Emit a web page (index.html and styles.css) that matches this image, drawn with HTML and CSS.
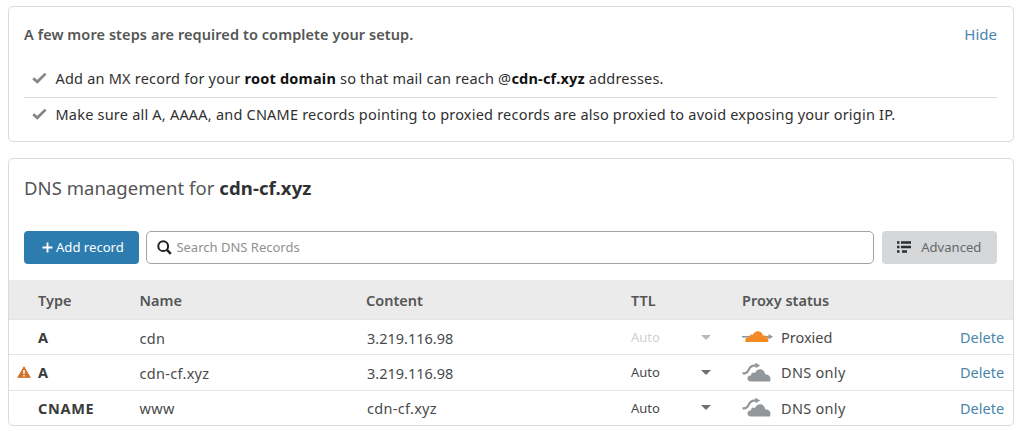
FILE: index.html
```html
<!DOCTYPE html>
<html lang="en">
<head>
<meta charset="utf-8">
<title>DNS management</title>
<link rel="stylesheet" href="styles.css">
</head>
<body>
<svg class="defs" width="0" height="0" aria-hidden="true">
  <symbol id="check" viewBox="0 0 15 12"><path d="M1.2 6.2 5.3 9.8 13.6 1.6" fill="none" stroke="currentColor" stroke-width="2.7"/></symbol>
  <symbol id="cloud-off" viewBox="0 0 30 21">
    <path d="M.5 11.200C4.700 11.800 5.700 9.600 7.100 6.900 8.500 4.100 10.100 3.300 14 3.300" fill="none" stroke="currentColor" stroke-width="2.2"/>
    <path d="M13.400.8 18.200 3.400 13.600 6.200Z"/>
    <path d="M8.800 19.600C4.200 19.200 4.400 13 8.900 13.400 9 10.600 11.300 9.700 13 10.900 15.100 5.500 22.600 6.200 23.200 12.300 27.800 12 29.700 16.200 27.800 19.600Z"/>
  </symbol>
</svg>
<section class="card steps">
  <div class="steps-head"><h2 class="steps-title">A few more steps are required to complete your setup.</h2><a class="link hide">Hide</a></div>
  <ul class="step-list">
    <li class="step"><svg class="check"><use href="#check"/></svg><span class="step-text">Add an MX record for your <b>root domain</b> so that mail can reach @<b>cdn-cf.xyz</b> addresses.</span></li>
    <li class="step"><svg class="check"><use href="#check"/></svg><span class="step-text">Make sure all A, AAAA, and CNAME records pointing to proxied records are also proxied to avoid exposing your origin IP.</span></li>
  </ul>
</section>
<section class="card dns">
  <h1 class="dns-title">DNS management for <b>cdn-cf.xyz</b></h1>
  <div class="toolbar">
    <button class="btn btn-add"><svg width="11" height="11" viewBox="0 0 11 11"><path d="M5.500.5v10M.5 5.500h10" stroke="currentColor" stroke-width="1.900"/></svg><span>Add record</span></button>
    <div class="search"><svg width="15" height="15" viewBox="0 0 15 15" fill="none" stroke="#222"><circle cx="6.200" cy="6.200" r="4.900" stroke-width="2"/><path d="M9.700 9.700 13.800 13.900" stroke-width="2.400"/></svg><span>Search DNS Records</span></div>
    <button class="btn btn-adv"><svg width="14" height="12" viewBox="0 0 14 12"><path d="M0 1.500h2.500M4 1.500h10M0 6h2.500M4 6h10M0 10.500h2.500M5 10.500h5" stroke="#2d2e32" stroke-width="2.300"/></svg><span>Advanced</span></button>
  </div>
  <div class="table">
    <div class="row head"><span></span><span>Type</span><span>Name</span><span>Content</span><span>TTL</span><span></span><span>Proxy status</span><span></span></div>
    <div class="row">
      <span></span><b class="type">A</b><span class="name">cdn</span><span class="ip">3.219.116.98</span><span class="ttl off">Auto</span><i class="caret off"></i>
      <span class="status"><svg class="cloud" viewBox="0 0 31 21"><path d="M0 9.800h28" stroke="#92979b" stroke-width="1.600"/><path d="M26.500 7 31 9.800 26.500 12.600Z" fill="#92979b"/><path d="M3.400 15C2.800 11.500 4.400 9.900 7.300 10.200 7.500 7.500 9.400 7 10.800 7.900 12.500 3 20 3 20.900 8.500 24.600 7.800 26.800 11 26.200 15Z" fill="#f38a26"/></svg><span class="proxied">Proxied</span></span><a class="link">Delete</a>
    </div>
    <div class="row">
      <svg class="warn" viewBox="0 0 14 12"><path d="M7 .8 13.200 11.400H.8Z" fill="#cf762e" stroke="#cf762e" stroke-linejoin="round"/><path d="M7 4v4M7 9v1.500" stroke="#fff" stroke-width="1.400"/></svg><b class="type">A</b><span class="name">cdn-cf.xyz</span><span class="ip">3.219.116.98</span><span class="ttl">Auto</span><i class="caret"></i>
      <span class="status"><svg class="cloud"><use href="#cloud-off" width="30" height="21"/></svg><span>DNS only</span></span><a class="link">Delete</a>
    </div>
    <div class="row">
      <span></span><b class="type cname">CNAME</b><span class="name">www</span><span class="name target">cdn-cf.xyz</span><span class="ttl">Auto</span><i class="caret"></i>
      <span class="status"><svg class="cloud"><use href="#cloud-off" width="30" height="21"/></svg><span>DNS only</span></span><a class="link">Delete</a>
    </div>
  </div>
</section>
</body>
</html>
```
FILE: styles.css
```css
* { box-sizing: border-box; }
body { margin: 0; padding: 6px 10px 0 8px; background: #fff; color: #484a4a; font: 14.5px/20px "Noto Sans", "Open Sans", sans-serif; }
.defs { display: block; }
.card { border: 1px solid #d9dada; border-radius: 5px; background: #fff; overflow: hidden; }
.steps { height: 136px; padding: 17px 16px 0 15px; }
.steps-head { display: flex; justify-content: space-between; }
.steps-title { margin: 0; font-size: 14.5px; line-height: 20px; font-weight: 600; letter-spacing: .08px; color: #545656; }
.link { color: #4a86ab; }
.hide { font-size: 15px; }
.step-list { list-style: none; margin: 16px 0 0; padding: 0; color: #303030; }
.step { display: flex; align-items: center; height: 38px; padding: 0 0 2px 8px; gap: 8.500px; border-bottom: 1px solid #d9dada; white-space: nowrap; }
.step:last-child { height: 33px; border: 0; padding-bottom: 1px; }
.step-text { letter-spacing: .21px; }
.step b { color: #111; }
.check { width: 15px; height: 12px; color: #858585; }
.dns { height: 268px; margin-top: 16px; }
.dns-title { margin: 15px 0 0 15px; font-size: 18.500px; line-height: 28px; font-weight: 400; letter-spacing: .04px; color: #545656; }
.dns-title b { color: #303131; letter-spacing: .12px; }
.toolbar { display: flex; gap: 7px; padding: 29px 16px 16px 15.400px; }
.btn { display: flex; align-items: center; justify-content: center; width: 115.5px; height: 33px; padding: 0 0 1px; border: 0; border-radius: 4px; font: 13.100px/20px "Noto Sans", sans-serif; }
.btn-add { gap: 3px; padding-left: 2px; color: #fff; background: #2c7cb0; width: 115px; }
.btn-adv { gap: 10px; color: #65686b; background: #d5d7d8; margin-left: 1px; }
.search { display: flex; align-items: center; gap: 4px; flex: 1; height: 33px; padding: 0 0 1px 10px; border: 1px solid #a0a3a3; border-radius: 5px; font-size: 13px; color: #8f9191; }
.row { display: grid; grid-template-columns: 29px 101.500px 226.500px 265px 70px 41px 209px 1fr; align-items: center; height: 35.300px; border-bottom: 1px solid #e4e5e5; white-space: nowrap; }
.head { height: 40px; background: #ebebeb; font-weight: 600; color: #545656; }
.row:last-child { border: 0; padding-bottom: 1px; }
.row .link { padding-left: 9px; }
.type { color: #3a3b3b; }
.cname { letter-spacing: .7px; }
.name { letter-spacing: .3px; padding-top: 1px; }
.ip { padding: 1px 0 0 1px; }
.target { padding-left: 1px; }
.ttl { font-size: 13px; }
.ttl.off { color: #d0d1d1; }
.caret { width: 0; border: 5px solid transparent; border-top-color: #707070; border-bottom: 0; }
.caret.off { border-top-color: #b8baba; }
.status { display: flex; align-items: center; gap: 8px; letter-spacing: .3px; }
.proxied { letter-spacing: 0; }
.cloud { width: 31px; height: 21px; color: #92979b; fill: currentColor; }
.warn { width: 14px; height: 12px; margin-left: 8px; }
```
